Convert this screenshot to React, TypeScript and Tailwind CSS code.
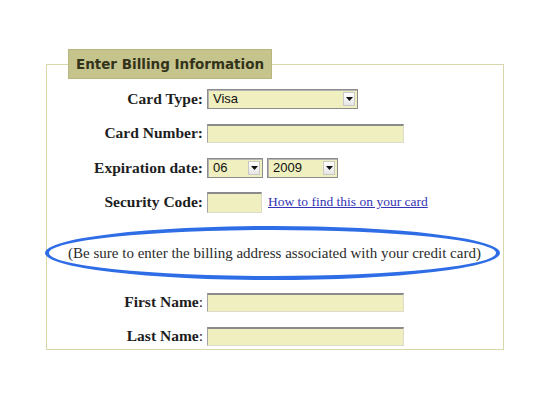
import React from 'react';

const labelCls =
  "w-[139px] shrink-0 text-right pr-[4px] font-['Liberation_Serif',serif] text-[15.5px] font-bold text-[#1e1e1e] leading-none";

const inputCls =
  'h-[19px] bg-[#efefc0] border border-[#dcdcc8] border-t-2 border-t-[#8a8a8a] border-l-[#a4a4a4]';

const Arrow: React.FC = () => (
  <svg width="7" height="4" viewBox="0 0 7 4">
    <path d="M0 0 L7 0 L3.5 4 Z" fill="#111" />
  </svg>
);

interface SelectProps {
  value: string;
  width: string;
}

const FakeSelect: React.FC<SelectProps> = ({ value, width }) => (
  <div
    className={`flex h-[20px] ${width} items-stretch border border-[#8c8c8c] bg-[#efefc0] shadow-[inset_1px_1px_0_#b4b4b4]`}
  >
    <span className="flex-1 pl-[5px] font-['Liberation_Sans',sans-serif] text-[13px] leading-[18px] text-[#111]">
      {value}
    </span>
    <span className="m-[2px] flex w-[12px] items-center justify-center border border-[#c8c8c8] bg-gradient-to-b from-white to-[#e6e6e6]">
      <Arrow />
    </span>
  </div>
);

const Row: React.FC<{ label: React.ReactNode; className?: string; children: React.ReactNode }> = ({
  label,
  className = '',
  children,
}) => (
  <div className={`flex h-[20px] items-center ${className}`}>
    <div className={labelCls}>{label}</div>
    <div className="flex items-center">{children}</div>
  </div>
);

const App: React.FC = () => {
  return (
    <div className="h-[400px] w-[550px] bg-white pt-[49px]">
      <fieldset className="ml-[46px] w-[458px] border border-[#d8d7a9] pl-[21px] pb-[3px]">
        <legend className="h-[30px] w-[204px] border border-[#b9b77f] bg-[#c6c48d]">
          <div className="text-center font-['DejaVu_Sans',sans-serif] text-[13.5px] font-bold leading-[28px] text-[#33331a]">
            Enter Billing Information
          </div>
        </legend>

        <Row label="Card Type:" className="mt-[10px]">
          <FakeSelect value="Visa" width="w-[151px]" />
        </Row>

        <Row label="Card Number:" className="mt-[14px]">
          <div className={`${inputCls} w-[197px]`} />
        </Row>

        <Row label="Expiration date:" className="mt-[15px]">
          <FakeSelect value="06" width="w-[56px]" />
          <div className="ml-[4px]">
            <FakeSelect value="2009" width="w-[71px]" />
          </div>
        </Row>

        <Row label="Security Code:" className="mt-[14px]">
          <div className={`${inputCls} h-[21px] w-[55px]`} />
          <a
            href="#"
            className="ml-[6px] font-['Liberation_Serif',serif] text-[13.5px] text-[#3434b4] underline"
          >
            How to find this on your card
          </a>
        </Row>

        <div className="-ml-[23px] mt-[14px] flex h-[54px] w-[455px] items-center justify-center rounded-[50%] border-[4px] border-[#2e6de6]">
          <span className="pl-[4px] font-['Liberation_Serif',serif] text-[15px] text-[#2b2b2b]">
            (Be sure to enter the billing address associated with your credit card)
          </span>
        </div>

        <Row
          label={
            <>
              First Name<span className="font-normal">:</span>
            </>
          }
          className="mt-[12px]"
        >
          <div className={`${inputCls} w-[197px]`} />
        </Row>

        <Row
          label={
            <>
              Last Name<span className="font-normal">:</span>
            </>
          }
          className="mt-[14px]"
        >
          <div className={`${inputCls} w-[197px]`} />
        </Row>
      </fieldset>
    </div>
  );
};

export default App;
